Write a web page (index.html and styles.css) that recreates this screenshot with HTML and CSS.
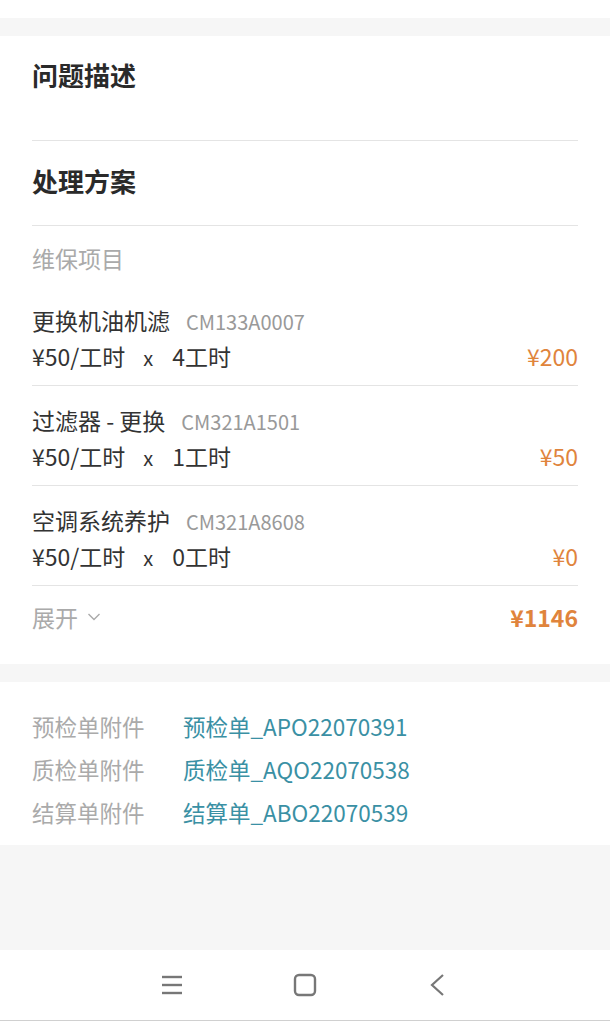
FILE: index.html
```html
<!DOCTYPE html>
<html lang="zh-CN">
<head>
    <meta charset="UTF-8">
    <meta name="viewport" content="width=device-width, initial-scale=1.0">
    <title>维保详情</title>
    <link rel="stylesheet" href="styles.css">
</head>
<body>
    <div class="page">
        <div class="top-strip"></div>
        <div class="gap"></div>

        <div class="card">
            <div class="section section-desc">
                <h2>问题描述</h2>
            </div>
            <div class="section section-plan">
                <h2>处理方案</h2>
            </div>
            <div class="sub-label">维保项目</div>

            <div class="item">
                <div class="item-name">更换机油机滤<span class="code">CM133A0007</span></div>
                <div class="item-line">
                    <span>¥50/工时<span class="times">x</span>4工时</span>
                    <span class="price">¥200</span>
                </div>
            </div>
            <div class="item">
                <div class="item-name">过滤器 - 更换<span class="code">CM321A1501</span></div>
                <div class="item-line">
                    <span>¥50/工时<span class="times">x</span>1工时</span>
                    <span class="price">¥50</span>
                </div>
            </div>
            <div class="item">
                <div class="item-name">空调系统养护<span class="code">CM321A8608</span></div>
                <div class="item-line">
                    <span>¥50/工时<span class="times">x</span>0工时</span>
                    <span class="price">¥0</span>
                </div>
            </div>

            <div class="total-row">
                <span class="expand">展开
                    <svg width="14" height="10" viewBox="0 0 14 10"><polyline points="1.5,2 7,7.5 12.5,2" fill="none" stroke="#aaa" stroke-width="1.4"/></svg>
                </span>
                <span class="total">¥1146</span>
            </div>
        </div>

        <div class="gap"></div>

        <div class="card attachments">
            <div class="attach-row"><span class="attach-label">预检单附件</span><span class="attach-link">预检单_APO22070391</span></div>
            <div class="attach-row"><span class="attach-label">质检单附件</span><span class="attach-link">质检单_AQO22070538</span></div>
            <div class="attach-row"><span class="attach-label">结算单附件</span><span class="attach-link">结算单_ABO22070539</span></div>
        </div>

        <div class="filler"></div>

        <div class="nav-bar">
            <div class="nav-slot">
                <svg width="22" height="20" viewBox="0 0 22 20"><g stroke="#777" stroke-width="2.4"><line x1="1" y1="2" x2="21" y2="2"/><line x1="1" y1="10" x2="21" y2="10"/><line x1="1" y1="18" x2="21" y2="18"/></g></svg>
            </div>
            <div class="nav-slot">
                <svg width="24" height="24" viewBox="0 0 24 24"><rect x="2" y="2" width="20" height="20" rx="4" fill="none" stroke="#777" stroke-width="2.4"/></svg>
            </div>
            <div class="nav-slot">
                <svg width="18" height="24" viewBox="0 0 18 24"><polyline points="14,2 3,12 14,22" fill="none" stroke="#777" stroke-width="2.2"/></svg>
            </div>
        </div>
    </div>
</body>
</html>
```

FILE: styles.css
```css
body {
    margin: 0;
    font-family: "Noto Sans CJK SC", "Noto Sans", sans-serif;
    background: #f6f6f6;
    color: #333;
}

.page {
    width: 610px;
    min-height: 1021px;
    display: flex;
    flex-direction: column;
}

.top-strip {
    height: 18px;
    background: #fff;
}

.gap {
    height: 18px;
    background: #f6f6f6;
}

.card {
    background: #fff;
    padding: 0 32px;
}

h2 {
    margin: 0;
    font-size: 26px;
    font-weight: bold;
    line-height: 34px;
    color: #2a2a2a;
}

.section {
    border-bottom: 1px solid #e4e4e4;
}

.section-desc {
    padding-top: 22px;
    height: 82px;
}

.section-plan {
    padding: 23px 0 27px;
}

.sub-label {
    font-size: 23px;
    line-height: 34px;
    color: #aaa;
    padding: 15px 0 11px;
}

.item {
    padding: 16px 0 11px;
    border-bottom: 1px solid #e4e4e4;
}

.item:last-of-type {
    padding-bottom: 10px;
}

.item-name {
    font-size: 23px;
    line-height: 36px;
    height: 36px;
    color: #333;
}

.code {
    font-size: 20px;
    line-height: 1;
    color: #999;
    margin-left: 16px;
}

.item-line {
    display: flex;
    justify-content: space-between;
    font-size: 23px;
    line-height: 36px;
    height: 36px;
    color: #333;
}

.times {
    font-size: 20px;
    line-height: 1;
    margin: 0 19px 0 18px;
}

.price {
    color: #e0843c;
}

.total-row {
    display: flex;
    justify-content: space-between;
    align-items: center;
    padding: 14px 0 30px;
    line-height: 34px;
    font-size: 23px;
}

.expand {
    color: #aaa;
    display: flex;
    align-items: center;
    gap: 9px;
}

.total {
    color: #e0843c;
    font-weight: bold;
}

.attachments {
    padding-top: 23px;
    padding-bottom: 11px;
}

.attach-row {
    display: flex;
    font-size: 22.5px;
    line-height: 43px;
}

.attach-label {
    color: #aaa;
    width: 151px;
}

.attach-link {
    color: #3a90a4;
}

.filler {
    flex: 1;
    background: #f6f6f6;
}

.nav-bar {
    height: 70px;
    background: #fff;
    border-bottom: 1px solid #d0d0d0;
    display: flex;
    justify-content: center;
    align-items: center;
}

.nav-slot {
    width: 133px;
    display: flex;
    justify-content: center;
    align-items: center;
}
```
